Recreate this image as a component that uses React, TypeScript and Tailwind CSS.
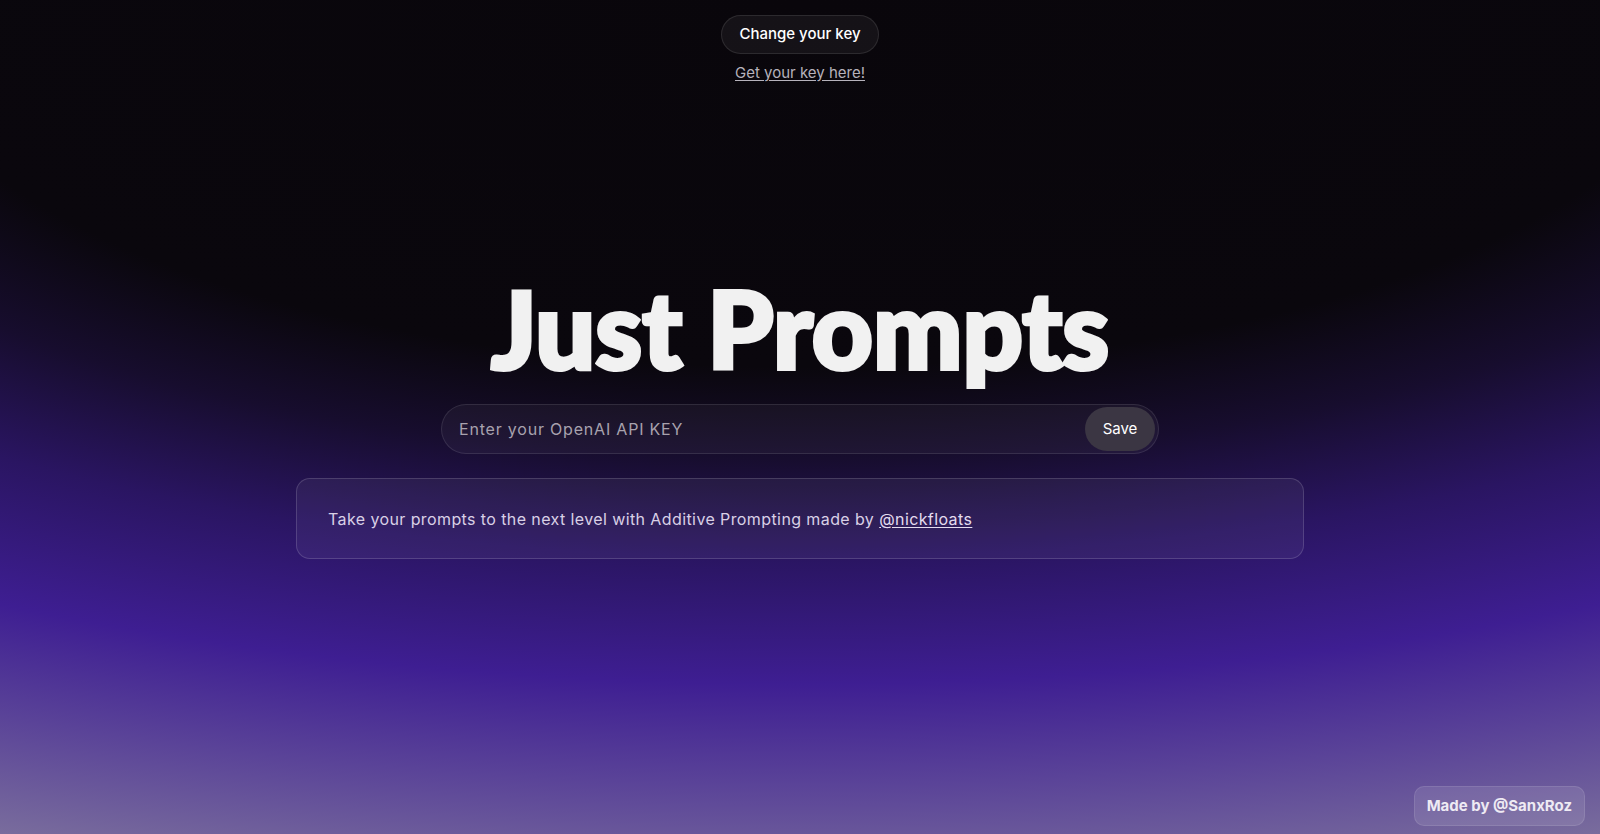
import React, { useState } from 'react';

const App = () => {
  const [apiKey, setApiKey] = useState('');

  return (
    <div
      className="relative min-h-screen w-full overflow-hidden flex flex-col items-center text-white bg-[#09060b] bg-[radial-gradient(ellipse_130%_100%_at_50%_0%,#09060b_0%,#0a070d_44%,#170d2e_55%,#2a1562_67%,#3e1e92_82%,#5a4398_94%,#7b6f9d_108%)]"
      style={{ fontFamily: 'Inter, "Noto Sans", sans-serif' }}
    >
      <header className="pt-[15px] flex flex-col items-center">
        <button className="h-[39px] px-[17px] rounded-full border border-white/10 bg-white/5 text-[15px] font-medium text-white">
          Change your key
        </button>
        <a href="#" className="mt-[9px] text-[15px] leading-[20px] text-[#b6b2bb] underline underline-offset-2">
          Get your key here!
        </a>
      </header>

      <main className="mt-[192px] flex flex-col items-center">
        <h1
          className="text-[106px] leading-none font-black text-[#f1f1f1] [-webkit-text-stroke:4px_#f1f1f1] [paint-order:stroke_fill]"
          style={{ fontFamily: 'Lato, "Noto Sans", sans-serif' }}
        >
          Just Prompts
        </h1>

        <div className="mt-[23px] w-[718px] h-[50px] rounded-full border border-white/10 bg-white/[0.04] flex items-center pl-[17px] pr-[3px]">
          <input
            value={apiKey}
            onChange={(e) => setApiKey(e.target.value)}
            placeholder="Enter your OpenAI API KEY"
            className="flex-1 bg-transparent outline-none text-[16px] tracking-[0.05em] text-white placeholder:text-[#a8a2ae]"
          />
          <button className="w-[70px] h-[44px] rounded-full bg-[#3b3643] text-[15px] text-white">
            Save
          </button>
        </div>

        <div className="mt-[24px] w-[1008px] h-[81px] rounded-[14px] border border-white/15 bg-white/[0.05] flex items-center px-[31px]">
          <p className="text-[16px] tracking-wide text-[#d9d0e6]">
            Take your prompts to the next level with Additive Prompting made by{' '}
            <a href="#" className="underline underline-offset-2 text-[#e4dcef]">@nickfloats</a>
          </p>
        </div>
      </main>

      <div className="absolute bottom-[8px] right-[15px] h-[40px] px-[12px] rounded-[10px] border border-white/10 bg-white/10 flex items-center text-[15px] font-bold text-[#eeeaf3]">
        Made by @SanxRoz
      </div>
    </div>
  );
};

export default App;
